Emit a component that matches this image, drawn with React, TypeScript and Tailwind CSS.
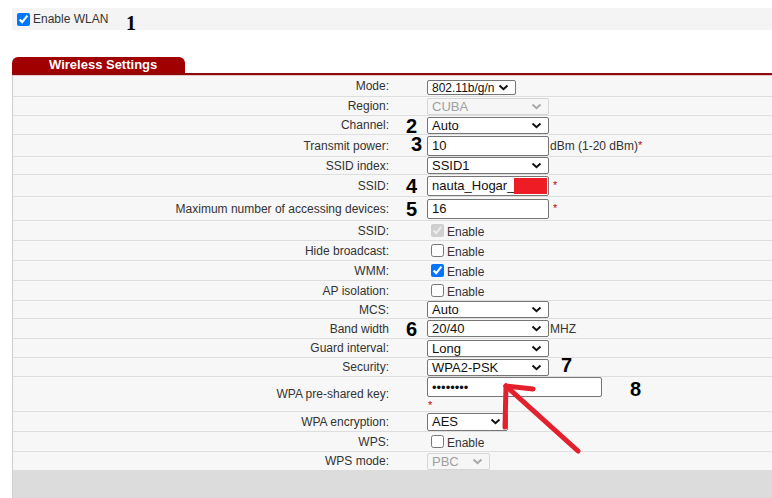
import type { ReactNode } from "react";

const FONT = { fontFamily: '"Liberation Sans", Arial, sans-serif' };

function Chevron({ muted }: { muted?: boolean }) {
    return (
        <svg width="11" height="7" viewBox="0 0 11 7" className="shrink-0">
            <polyline
                points="1.5,1.5 5.5,5.2 9.5,1.5"
                fill="none"
                stroke={muted ? "#a8a8a8" : "#111"}
                strokeWidth="2"
            />
        </svg>
    );
}

function Select({ value, width, disabled, h = "h-[17px]", text = "text-[13px]" }: { value: string; width: string; disabled?: boolean; h?: string; text?: string }) {
    return (
        <div
            className={`${width} ${h} ${text} flex items-center justify-between pl-[4px] pr-[6px] rounded-[2px] border leading-none ${
                disabled ? "border-[#d6d6d6] bg-[#f6f6f6] text-[#a0a0a0]" : "border-[#767676] bg-white text-[#111]"
            }`}
        >
            <span>{value}</span>
            <Chevron muted={disabled} />
        </div>
    );
}

function TextBox({ value, width, children }: { value: string; width: string; children?: ReactNode }) {
    return (
        <div className={`${width} h-[20px] relative flex items-center pl-[4px] rounded-[2px] border border-[#767676] bg-white text-[13px] text-[#111] leading-none`}>
            <span>{value}</span>
            {children}
        </div>
    );
}

function Check({ checked, disabled }: { checked?: boolean; disabled?: boolean }) {
    return (
        <span className="flex items-center gap-[3px] text-[12px] text-[#333] pl-[4px]">
            <input type="checkbox" defaultChecked={checked} disabled={disabled} className="w-[13px] h-[13px] m-0" />
            <span className="pt-[3px]">Enable</span>
        </span>
    );
}

const Star = () => <span className="text-[#c00000] text-[11px] ml-[4px]">*</span>;

function Row({ label, h, children, top }: { label: string; h: string; children?: ReactNode; top?: boolean }) {
    return (
        <div className={`flex ${h} border-b border-[#dedede]`}>
            <div className="w-[380px] shrink-0 flex items-center justify-end pr-[4px] text-[12px] text-[#333]">{label}</div>
            <div className={`flex pl-[34px] ${top ? "items-start" : "items-center"}`}>{children}</div>
        </div>
    );
}

const Num = ({ n, className }: { n: string; className: string }) => (
    <span className={`absolute text-[20px] font-bold text-black leading-none ${className}`}>{n}</span>
);

export default function App() {
    return (
        <div className="relative w-[772px] h-[498px] bg-white overflow-hidden" style={FONT}>
            {/* Enable WLAN bar */}
            <div className="mt-[8px] ml-[12px] h-[22px] bg-[#f4f4f4] flex items-center pl-[5px] gap-[3px] text-[12px] text-[#333]">
                <input type="checkbox" defaultChecked className="w-[13px] h-[13px] m-0" />
                <span>Enable WLAN</span>
            </div>

            {/* tab header */}
            <div className="mt-[27px] ml-[12px]">
                <div className="w-[173px] h-[16px] bg-[#a00000] rounded-t-[6px] flex items-center pl-[37px] text-white font-bold text-[13px]">
                    Wireless Settings
                </div>
                <div className="h-[2px] bg-[#8c0a0a]" />
                <div className="h-[1px] bg-[#ecc6c6]" />
            </div>

            {/* settings table */}
            <div className="ml-[12px] border-l border-[#cfcfcf] bg-[#f7f7f7]">
                <Row label="Mode:" h="h-[21px]">
                    <div className="pt-[3px]"><Select value="802.11b/g/n" width="w-[89px]" h="h-[15px]" text="text-[12px]" /></div>
                </Row>
                <Row label="Region:" h="h-[19px]">
                    <Select value="CUBA" width="w-[122px]" disabled />
                </Row>
                <Row label="Channel:" h="h-[19px]">
                    <Select value="Auto" width="w-[122px]" />
                </Row>
                <Row label="Transmit power:" h="h-[22px]">
                    <TextBox value="10" width="w-[122px]" />
                    <span className="text-[12px] text-[#333] ml-[1px]">dBm (1-20 dBm)</span>
                    <span className="text-[#c00000] text-[11px]">*</span>
                </Row>
                <Row label="SSID index:" h="h-[18px]">
                    <Select value="SSID1" width="w-[122px]" />
                </Row>
                <Row label="SSID:" h="h-[22px]">
                    <TextBox value="nauta_Hogar_" width="w-[122px]">
                        <div className="absolute right-[1px] top-[1px] bottom-[1px] w-[33px] bg-[#ee1c24]" />
                    </TextBox>
                    <Star />
                </Row>
                <Row label="Maximum number of accessing devices:" h="h-[24px]">
                    <TextBox value="16" width="w-[122px]" />
                    <Star />
                </Row>
                <Row label="SSID:" h="h-[20px]"><Check checked disabled /></Row>
                <Row label="Hide broadcast:" h="h-[20px]"><Check /></Row>
                <Row label="WMM:" h="h-[20px]"><Check checked /></Row>
                <Row label="AP isolation:" h="h-[20px]"><Check /></Row>
                <Row label="MCS:" h="h-[18px]">
                    <Select value="Auto" width="w-[122px]" />
                </Row>
                <Row label="Band width" h="h-[20px]">
                    <Select value="20/40" width="w-[122px]" />
                    <span className="text-[12px] text-[#333] ml-[1px]">MHZ</span>
                </Row>
                <Row label="Guard interval:" h="h-[19px]">
                    <Select value="Long" width="w-[122px]" />
                </Row>
                <Row label="Security:" h="h-[19px]">
                    <Select value="WPA2-PSK" width="w-[122px]" />
                </Row>
                <Row label="WPA pre-shared key:" h="h-[35px]" top>
                    <div className="flex flex-col">
                        <TextBox value="••••••••" width="w-[175px]" />
                        <span className="text-[#c00000] text-[11px] leading-none mt-[3px] ml-[1px]">*</span>
                    </div>
                </Row>
                <Row label="WPA encryption:" h="h-[20px]">
                    <Select value="AES" width="w-[81px]" h="h-[18px]" />
                </Row>
                <Row label="WPS:" h="h-[20px]"><Check /></Row>
                <div className="flex h-[18px]">
                    <div className="w-[380px] shrink-0 flex items-center justify-end pr-[4px] text-[12px] text-[#333]">WPS mode:</div>
                    <div className="flex items-center pl-[34px]">
                        <Select value="PBC" width="w-[63px]" disabled />
                    </div>
                </div>
                <div className="h-[28px] bg-[#dcdcdc]" />
            </div>

            {/* annotations */}
            <span className="absolute left-[126px] top-[13px] text-[20px] font-bold text-black leading-none" style={{ fontFamily: '"Liberation Serif", serif' }}>1</span>
            <Num n="2" className="left-[406px] top-[116px]" />
            <Num n="3" className="left-[411px] top-[134px]" />
            <Num n="4" className="left-[406px] top-[176px]" />
            <Num n="5" className="left-[406px] top-[199px]" />
            <Num n="6" className="left-[406px] top-[319px]" />
            <Num n="7" className="left-[561px] top-[355px]" />
            <Num n="8" className="left-[630px] top-[379px]" />

            <svg className="absolute left-0 top-0 pointer-events-none" width="772" height="498">
                <g stroke="#e3202c" strokeWidth="5" strokeLinecap="round" fill="none">
                    <line x1="578" y1="451" x2="506" y2="386" />
                    <line x1="506" y1="386" x2="533" y2="389" />
                    <line x1="506" y1="386" x2="505" y2="427" />
                </g>
            </svg>
        </div>
    );
}
